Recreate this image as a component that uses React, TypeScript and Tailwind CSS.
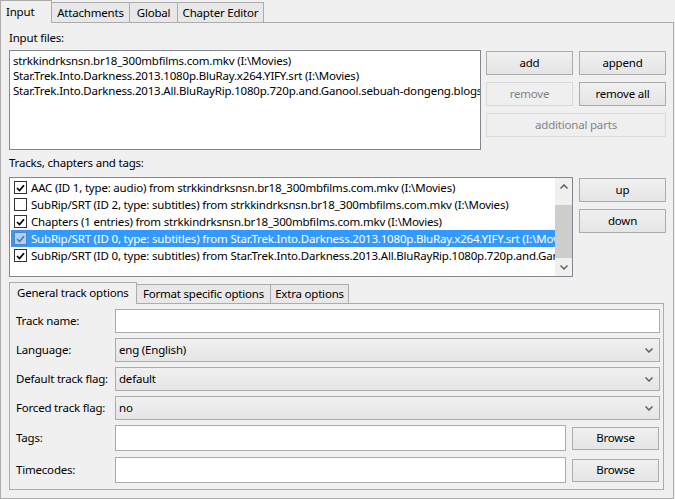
import React from "react";

const font = { fontFamily: '"Noto Sans", "Open Sans", sans-serif' };

function Btn({ label, disabled, className = "" }: { label: string; disabled?: boolean; className?: string }) {
  return (
    <div
      className={
        "flex items-center justify-center border whitespace-nowrap " +
        (disabled
          ? "border-[#d9d9d9] bg-[#efefef] text-[#838383] "
          : "border-[#acacac] bg-gradient-to-b from-[#f0f0f0] to-[#e5e5e5] text-black ") +
        className
      }
    >
      {label}
    </div>
  );
}

function Chevron({ up }: { up?: boolean }) {
  return (
    <svg width="8" height="5" viewBox="0 0 8 5" className="block">
      {up ? (
        <path d="M0.5 4.5 L4 1 L7.5 4.5" fill="none" stroke="#606060" strokeWidth="1.5" />
      ) : (
        <path d="M0.5 0.5 L4 4 L7.5 0.5" fill="none" stroke="#606060" strokeWidth="1.5" />
      )}
    </svg>
  );
}

function Check({ checked, selected }: { checked: boolean; selected?: boolean }) {
  return (
    <div
      className={
        "w-[13px] h-[13px] shrink-0 border flex items-center justify-center " +
        (selected ? "border-[#5a84b3] bg-[#a9d3fe]" : "border-[#333333] bg-white")
      }
    >
      {checked && (
        <svg width="9" height="8" viewBox="0 0 9 8">
          <path d="M1 4 L3.5 6.5 L8 1.2" fill="none" stroke={selected ? "#4d7aab" : "#000"} strokeWidth="1.7" />
        </svg>
      )}
    </div>
  );
}

interface Track {
  checked: boolean;
  text: string;
  selected?: boolean;
}

const tracks: Track[] = [
  { checked: true, text: "AAC (ID 1, type: audio) from strkkindrksnsn.br18_300mbfilms.com.mkv (I:\\Movies)" },
  { checked: false, text: "SubRip/SRT (ID 2, type: subtitles) from strkkindrksnsn.br18_300mbfilms.com.mkv (I:\\Movies)" },
  { checked: true, text: "Chapters (1 entries) from strkkindrksnsn.br18_300mbfilms.com.mkv (I:\\Movies)" },
  {
    checked: true,
    selected: true,
    text: "SubRip/SRT (ID 0, type: subtitles) from Star.Trek.Into.Darkness.2013.1080p.BluRay.x264.YIFY.srt (I:\\Movies)",
  },
  {
    checked: true,
    text: "SubRip/SRT (ID 0, type: subtitles) from Star.Trek.Into.Darkness.2013.All.BluRayRip.1080p.720p.and.Ganool.sebuah-dongeng.blogspot.com.srt (I:\\Movies)",
  },
];

const files = [
  "strkkindrksnsn.br18_300mbfilms.com.mkv (I:\\Movies)",
  "Star.Trek.Into.Darkness.2013.1080p.BluRay.x264.YIFY.srt (I:\\Movies)",
  "Star.Trek.Into.Darkness.2013.All.BluRayRip.1080p.720p.and.Ganool.sebuah-dongeng.blogspot.com.srt (I:\\Movies)",
];

function Combo({ value }: { value: string }) {
  return (
    <div className="flex-1 h-[24px] border border-[#acacac] bg-gradient-to-b from-[#f0f0f0] to-[#e5e5e5] flex items-center pl-[3px] pr-[6px]">
      <span className="flex-1">{value}</span>
      <Chevron />
    </div>
  );
}

function FormRow({ label, children, className = "" }: { label: string; children: React.ReactNode; className?: string }) {
  return (
    <div className={"flex items-center " + className}>
      <div className="w-[99px] shrink-0 whitespace-nowrap">{label}</div>
      {children}
    </div>
  );
}

export default function App() {
  return (
    <div
      className="w-[675px] h-[499px] bg-[#f0f0f0] text-black text-[11.5px] tracking-[-0.2px] overflow-hidden flex flex-col"
      style={font}
    >
      {/* top tabs */}
      <div className="flex items-end h-[23px] shrink-0 relative z-10">
        <div className="w-[52px] h-[23px] border border-b-0 border-[#acacac] bg-[#f0f0f0] pl-[5px] leading-[21px]">
          Input
        </div>
        <div className="w-[78px] h-[20px] mb-px border border-l-0 border-b-0 border-[#acacac] bg-[#e8e8e8] flex items-center justify-center">
          Attachments
        </div>
        <div className="w-[48px] h-[20px] mb-px border border-l-0 border-b-0 border-[#acacac] bg-[#e8e8e8] flex items-center justify-center">
          Global
        </div>
        <div className="w-[86px] h-[20px] mb-px border border-l-0 border-b-0 border-[#acacac] bg-[#e8e8e8] flex items-center justify-center">
          Chapter Editor
        </div>
      </div>

      {/* main pane */}
      <div className="w-[674px] flex-1 border border-[#acacac] -mt-px pl-[8px] pt-[6px] flex flex-col">
        <div className="h-[17px] leading-[17px]">Input files:</div>
        <div className="flex mt-[4px]">
          <div className="w-[472px] h-[100px] border border-[#828790] bg-white pt-[2px] pl-[3px] overflow-hidden">
            {files.map((f) => (
              <div key={f} className="leading-[15px] whitespace-nowrap">
                {f}
              </div>
            ))}
          </div>
          <div className="ml-[5px] mt-px flex flex-col gap-[7px]">
            <div className="flex gap-[6px]">
              <Btn label="add" className="w-[87px] h-[24px]" />
              <Btn label="append" className="w-[87px] h-[24px]" />
            </div>
            <div className="flex gap-[6px]">
              <Btn label="remove" disabled className="w-[87px] h-[24px]" />
              <Btn label="remove all" className="w-[87px] h-[24px]" />
            </div>
            <Btn label="additional parts" disabled className="w-[180px] h-[24px]" />
          </div>
        </div>

        <div className="h-[17px] leading-[17px] mt-[4px]">Tracks, chapters and tags:</div>
        <div className="flex mt-[6px]">
          <div className="w-[564px] h-[100px] border border-[#828790] bg-white flex overflow-hidden">
            <div className="flex-1 min-w-0 pt-px pl-px overflow-hidden">
              {tracks.map((t, i) => (
                <div
                  key={i}
                  className={
                    "h-[17px] flex items-center pl-[3px] gap-[4px] whitespace-nowrap " +
                    (t.selected ? "bg-[#3399ff] text-white" : "")
                  }
                >
                  <Check checked={t.checked} selected={t.selected} />
                  <span>{t.text}</span>
                </div>
              ))}
            </div>
            <div className="w-[17px] shrink-0 bg-[#f0f0f0] flex flex-col items-center">
              <div className="h-[17px] flex items-center justify-center">
                <Chevron up />
              </div>
              <div className="w-[17px] mt-[10px] h-[53px] bg-[#cdcdcd]" />
              <div className="flex-1" />
              <div className="h-[17px] flex items-center justify-center">
                <Chevron />
              </div>
            </div>
          </div>
          <div className="ml-[6px] mt-px flex flex-col gap-[7px]">
            <Btn label="up" className="w-[87px] h-[24px]" />
            <Btn label="down" className="w-[87px] h-[24px]" />
          </div>
        </div>

        {/* inner tabs */}
        <div className="mt-[5px] flex items-end h-[22px] shrink-0 relative z-10">
          <div className="w-[128px] h-[22px] border border-b-0 border-[#acacac] bg-[#f0f0f0] pl-[7px] leading-[19px] whitespace-nowrap">
            General track options
          </div>
          <div className="w-[134px] h-[19px] mb-px border border-l-0 border-b-0 border-[#acacac] bg-[#e8e8e8] flex items-center justify-center whitespace-nowrap">
            Format specific options
          </div>
          <div className="w-[78px] h-[19px] mb-px border border-l-0 border-b-0 border-[#acacac] bg-[#e8e8e8] flex items-center justify-center whitespace-nowrap">
            Extra options
          </div>
        </div>
        <div className="w-[655px] h-[187px] border border-[#acacac] -mt-px flex flex-col pl-[6px] pr-[3px] pt-[5px]">
          <FormRow label="Track name:">
            <div className="flex-1 h-[24px] border border-[#acacac] bg-white" />
          </FormRow>
          <FormRow label="Language:" className="mt-[5px]">
            <Combo value="eng (English)" />
          </FormRow>
          <FormRow label="Default track flag:" className="mt-[5px]">
            <Combo value="default" />
          </FormRow>
          <FormRow label="Forced track flag:" className="mt-[5px]">
            <Combo value="no" />
          </FormRow>
          <FormRow label="Tags:" className="mt-[5px]">
            <div className="flex-1 h-[26px] border border-[#acacac] bg-white" />
            <Btn label="Browse" className="ml-[6px] w-[87px] h-[23px] mr-px" />
          </FormRow>
          <FormRow label="Timecodes:" className="mt-[6px]">
            <div className="flex-1 h-[26px] border border-[#acacac] bg-white" />
            <Btn label="Browse" className="ml-[6px] w-[87px] h-[23px] mr-px" />
          </FormRow>
        </div>
      </div>
    </div>
  );
}
